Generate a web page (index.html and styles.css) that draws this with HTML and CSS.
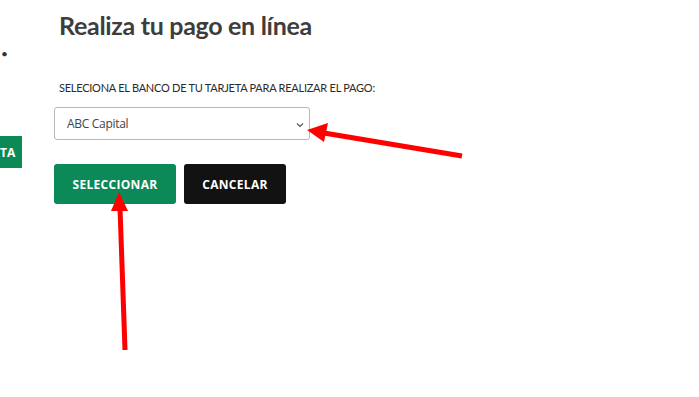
FILE: index.html
```html
<!DOCTYPE html>
<html lang="es">
<head>
<meta charset="utf-8">
<title>Realiza tu pago en línea</title>
<link rel="stylesheet" href="styles.css">
</head>
<body>
<div class="page">
  <aside class="side">
    <span class="side-dot">•</span>
    <span class="side-btn">TA</span>
  </aside>
  <main class="main">
    <h1 class="title">Realiza tu pago en línea</h1>
    <p class="label">SELECIONA EL BANCO DE TU TARJETA PARA REALIZAR EL PAGO:</p>
    <div class="select">
      <span class="select-text">ABC Capital</span>
      <svg class="chev" width="8" height="6" viewBox="0 0 8 6"><path d="M1 1.5 L4 4.5 L7 1.5" fill="none" stroke="#555" stroke-width="1.2"/></svg>
    </div>
    <div class="actions">
      <button class="btn btn-green">SELECCIONAR</button>
      <button class="btn btn-black">CANCELAR</button>
    </div>
  </main>
</div>
<svg class="arrows" width="699" height="397" viewBox="0 0 699 397">
  <g fill="#ff0000" stroke="none">
    <line x1="462" y1="156" x2="324" y2="133" stroke="#ff0000" stroke-width="5"/>
    <polygon points="307,130 328,123 324,142"/>
    <line x1="125" y1="350" x2="120" y2="208" stroke="#ff0000" stroke-width="5"/>
    <polygon points="119,192 128,211 111,211"/>
  </g>
</svg>
</body>
</html>
```
FILE: styles.css
```css
html, body {
  margin: 0;
  padding: 0;
  background: #ffffff;
}
body {
  width: 699px;
  height: 397px;
  overflow: hidden;
  position: relative;
  font-family: "Lato", "Open Sans", sans-serif;
}
.page {
  display: flex;
}
.side {
  width: 22px;
  flex: none;
  display: flex;
  flex-direction: column;
  align-items: flex-start;
}
.side-dot {
  margin-top: 45px;
  margin-left: 1px;
  font-size: 12px;
  line-height: 18px;
  color: #333;
}
.side-btn {
  margin-top: 73px;
  width: 22px;
  height: 32px;
  box-sizing: border-box;
  padding-left: 0;
  display: flex;
  align-items: center;
  background: #0b8a57;
  color: #fff;
  font-family: "Open Sans", sans-serif;
  font-weight: 700;
  font-size: 12px;
  white-space: nowrap;
}
.main {
  padding-left: 32px;
  display: flex;
  flex-direction: column;
}
.title {
  margin: 9px 0 0 5px;
  font-size: 25px;
  line-height: 32px;
  font-weight: 700;
  color: #3d3d3d;
  letter-spacing: -0.3px;
}
.label {
  margin: 40px 0 0 5px;
  font-size: 11px;
  line-height: 14px;
  color: #2a2a2a;
  letter-spacing: -0.25px;
}
.select {
  margin-top: 12px;
  width: 256px;
  height: 33px;
  box-sizing: border-box;
  border: 1px solid #b8b8b8;
  border-radius: 3px;
  display: flex;
  align-items: center;
  justify-content: space-between;
  padding: 0 5px 0 12px;
}
.select-text {
  font-family: "Open Sans", sans-serif;
  font-size: 12px;
  color: #444;
  letter-spacing: -0.3px;
}
.chev {
  margin-top: 3px;
}
.actions {
  margin-top: 24px;
  display: flex;
  gap: 8px;
}
.btn {
  height: 40px;
  border: none;
  border-radius: 3px;
  color: #fff;
  font-family: "Open Sans", sans-serif;
  font-weight: 700;
  font-size: 12px;
  letter-spacing: 0.3px;
  padding: 0;
}
.btn-green {
  width: 122px;
  background: #0b8a57;
}
.btn-black {
  width: 102px;
  background: #121212;
}
.arrows {
  position: absolute;
  left: 0;
  top: 0;
  pointer-events: none;
}
```
